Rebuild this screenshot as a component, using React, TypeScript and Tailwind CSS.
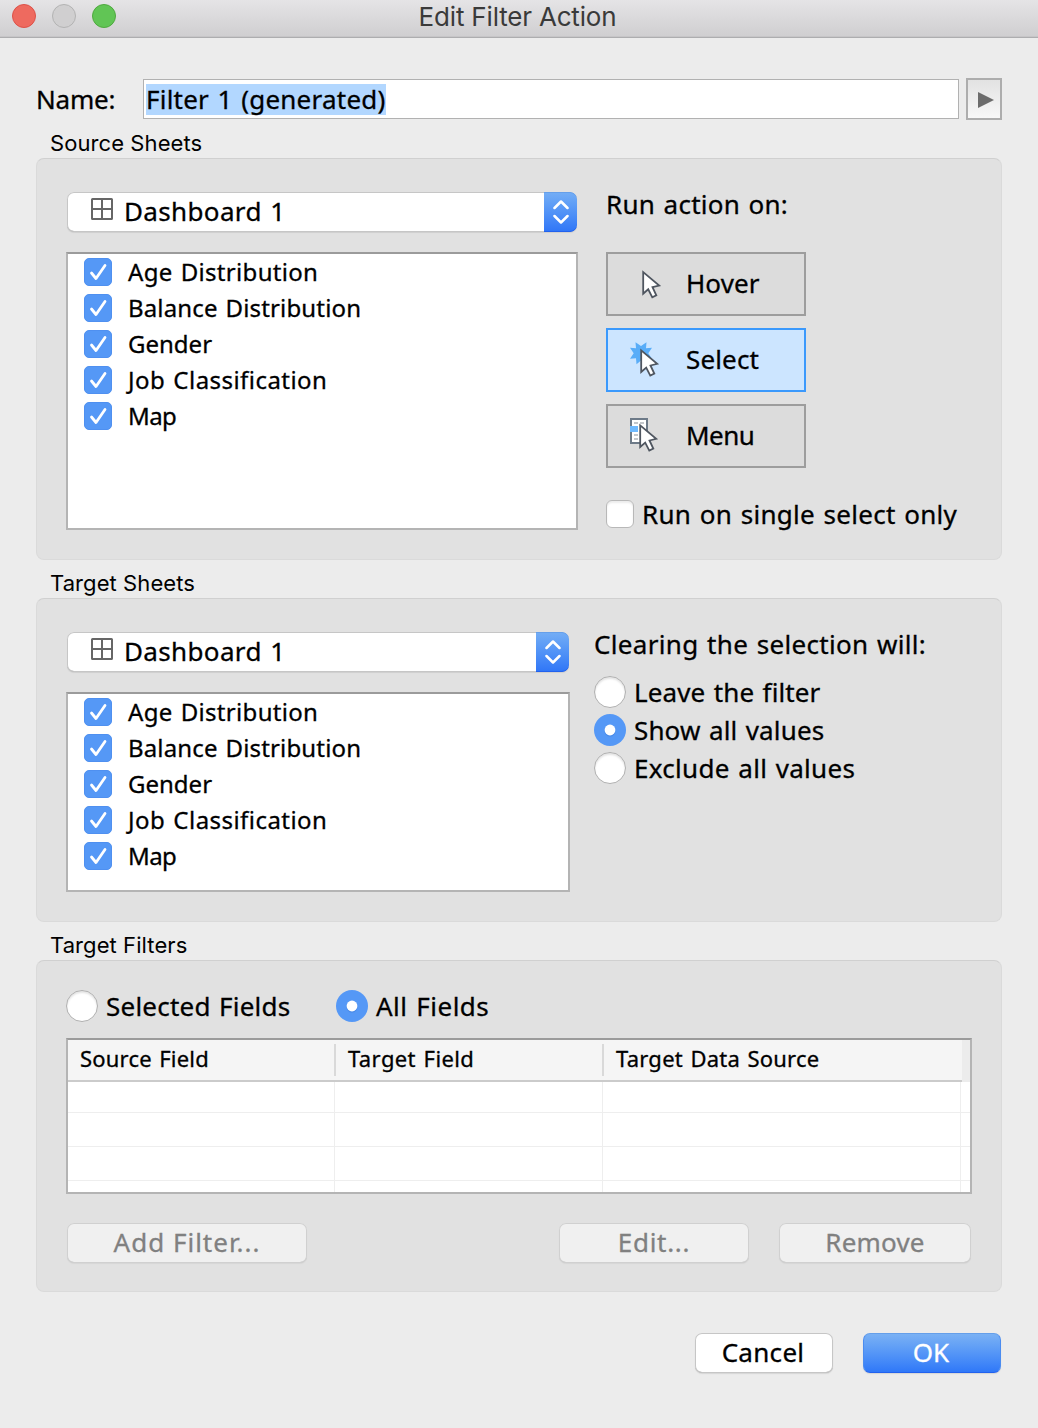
import React from "react";

const SHEETS = [
  { name: "Age Distribution", tracking: "tracking-[0.32px]" },
  { name: "Balance Distribution", tracking: "tracking-[0.15px]" },
  { name: "Gender", tracking: "tracking-[0px]" },
  { name: "Job Classification", tracking: "tracking-[0.45px]" },
  { name: "Map", tracking: "tracking-[-0.6px]" },
];

function TitleBar() {
  return (
    <header className="grid h-[38px] shrink-0 grid-cols-[1fr_auto_1fr] items-start border-b border-b-[#adadaf] bg-linear-to-b from-[#e5e4e6] to-[#cfced0] shadow-[inset_0_-1px_0_#c6c5c7]">
      <div className="flex gap-4 pt-1 pl-3">
        <span className="size-6 rounded-full border border-[#dd5148] bg-[#ee6a5f]" />
        <span className="size-6 rounded-full border border-[#b3b3b3] bg-[#d0cfd0]" />
        <span className="size-6 rounded-full border border-[#4fa93f] bg-[#61c555]" />
      </div>
      <h1 className="mr-[3px] font-['Inter',sans-serif] text-[26px] leading-[34px] tracking-[-0.18px] whitespace-nowrap text-[#3a3a3a] [word-spacing:0px]">Edit Filter Action</h1>
    </header>
  );
}

function Group({ title, className, children }: { title: string; className: string; children: React.ReactNode }) {
  return (
    <section>
      <h2 className="h-[38px] pt-2 pl-[14px] font-['Inter',sans-serif] text-[22px] leading-[30px] tracking-[0.08px] [-webkit-text-stroke:0px] [word-spacing:0px]">{title}</h2>
      <div className={`rounded-lg border border-[#dadada] border-t-[#d0d0d0] bg-[#e1e1e1] ${className}`}>{children}</div>
    </section>
  );
}

function Dropdown() {
  return (
    <div className="mx-px flex h-10 overflow-hidden rounded-[7px] bg-white shadow-[inset_0_0_0_1px_#c6c6c6,inset_0_-1px_0_#a8a8a8,0_1px_1px_#cfcfcf]">
      <svg className="mt-[6px] ml-6 size-[22px]" viewBox="0 0 22 22" fill="none" stroke="#666" strokeWidth="2">
        <rect x="1" y="1" width="20" height="20" rx="0.5" />
        <path d="M11 1v20M1 11h20" />
      </svg>
      <span className="ml-[11px] flex-1 leading-[39px] tracking-[0.35px]">Dashboard 1</span>
      <span className="flex w-[33px] items-center justify-center rounded-r-[7px] bg-linear-to-b from-[#74aef5] to-[#2f75f7] shadow-[inset_0_1px_0_#659fea,inset_0_-1px_0_#2262ee]">
        <svg className="h-6 w-4" viewBox="0 0 16 24" fill="none" stroke="#fff" strokeWidth="2.5" strokeLinecap="round" strokeLinejoin="round">
          <path d="M1.500 8 8 1.500 14.500 8M1.500 16 8 22.500 14.500 16" />
        </svg>
      </span>
    </div>
  );
}

function SheetList({ className }: { className: string }) {
  return (
    <ul className={`border-2 border-[#b4b4b4] border-t-[#9b9b9b] bg-white pl-4 text-2xl leading-9 ${className}`}>
      {SHEETS.map((s) => (
        <li key={s.name} className="flex h-9 items-center gap-4">
          <span className="flex size-7 items-center justify-center rounded-[5px] border border-[#4f90f0] bg-[#5598f6]">
            <svg className="size-[26px]" viewBox="0 0 26 26" fill="none" stroke="#fff" strokeWidth="2.8" strokeLinecap="round" strokeLinejoin="round">
              <path d="M6.500 14 11 19.500 20 6.500" />
            </svg>
          </span>
          <span className={s.tracking}>{s.name}</span>
        </li>
      ))}
    </ul>
  );
}

function Radio({ label, on, className }: { label: string; on?: boolean; className?: string }) {
  return (
    <div className="flex h-8 items-center gap-2">
      {on ? (
        <svg className="size-8" viewBox="0 0 32 32">
          <circle cx="16" cy="16" r="16" fill="#5598f6" />
          <circle cx="16" cy="17" r="5.500" fill="#3f7fe0" opacity="0.6" />
          <circle cx="16" cy="16" r="5.400" fill="#fff" />
        </svg>
      ) : (
        <span className="size-8 rounded-full border border-[#b0b0b0] bg-white shadow-[inset_0_2px_2px_#e4e4e4]" />
      )}
      <span className={`whitespace-nowrap ${className ?? ""}`}>{label}</span>
    </div>
  );
}

function Cursor() {
  return <path d="M1.200 2.400V24L6.200 19.600 10.300 27.600 14.300 25.600 10.500 17.500 17.200 15.800Z" fill="#fff" stroke="#4f5660" strokeWidth="1.8" />;
}

function HoverIcon() {
  return (
    <svg className="size-10" viewBox="0 0 40 40">
      <g transform="translate(12 5.700)"><Cursor /></g>
    </svg>
  );
}

function SelectIcon() {
  return (
    <svg className="size-10" viewBox="0 0 40 40">
      <path d="M5.500 2.300 11 6 16.500 2.300 16 8.300 22 7.800 18.300 13.300 22 18.800 16 18.300 11 20.600 6.500 24.300 6 18.300 0 18.800 3.700 13.300 0 7.800 6 8.300Z" fill="#59adf8" />
      <g transform="translate(10 8)"><Cursor /></g>
    </svg>
  );
}

function MenuIcon() {
  return (
    <svg className="size-10" viewBox="0 0 40 40">
      <rect x="1" y="3" width="16" height="24" fill="#fff" stroke="#6d7a88" strokeWidth="2" />
      <path d="M4 7h4M10 7h4M4 19h4M4 23h4" stroke="#c3c7cb" strokeWidth="2" />
      <path d="M0 10h8v6H0z" fill="#6fbaff" />
      <g transform="translate(9 7)"><Cursor /></g>
    </svg>
  );
}

function ActionButton({ label, icon, active, className }: { label: string; icon: React.ReactNode; active?: boolean; className: string }) {
  return (
    <button className={`flex h-16 w-[200px] items-center border-2 pl-[22px] ${active ? "border-[#3b99fc] bg-[#cce5ff]" : "border-[#9d9d9d] bg-[#dcdcdc]"}`}>
      {icon}
      <span className={`mb-0.5 ml-4 ${className}`}>{label}</span>
    </button>
  );
}

function DisabledButton({ label, className }: { label: string; className: string }) {
  return (
    <button className={`h-10 rounded-[7px] bg-[#f0f0f0] pb-px leading-[39px] text-[#808080] shadow-[inset_0_0_0_1px_#d0d0d0,inset_0_-1px_0_#c0c0c0,0_1px_1px_#d6d6d6] [-webkit-text-stroke:0.3px_#808080] ${className}`}>{label}</button>
  );
}

function FieldTable() {
  return (
    <div className="mt-4 h-[156px] overflow-hidden border-2 border-[#b4b4b4] border-t-[#9b9b9b] bg-white">
      <div className="flex h-[42px] bg-[#ececec] text-[22px] leading-[36px]">
        <div className="flex w-[894px] items-start border-b-2 border-[#cbcbcb] bg-[#f5f5f5]">
          <span className="w-[266px] pl-3 tracking-[0.2px]">Source Field</span>
          <span className="mt-1 h-8 w-0.5 bg-[#d9d9d9]" />
          <span className="w-[266px] pl-3 tracking-[0.4px]">Target Field</span>
          <span className="mt-1 h-8 w-0.5 bg-[#d9d9d9]" />
          <span className="pl-3 tracking-[0.23px]">Target Data Source</span>
        </div>
      </div>
      {["h-[31px]", "h-[34px]", "h-[34px]", "h-[34px]"].map((h, i) => (
        <div key={i} className={`grid grid-cols-[267px_268px_358px_1fr] border-b border-[#eee] ${h}`}>
          <span className="border-r border-[#eee]" />
          <span className="border-r border-[#eee]" />
          <span className="border-r border-[#eee]" />
        </div>
      ))}
    </div>
  );
}

export default function App() {
  return (
    <main className="flex h-[1428px] w-[1038px] flex-col overflow-hidden bg-[#ececec] font-['Noto_Sans',sans-serif] text-[26px] text-black [word-spacing:1.5px]">
      <TitleBar />
      <div className="px-9 pt-10 [-webkit-text-stroke:0.3px_black]">
        <div className="flex h-[42px] items-center">
          <label className="w-[107px] tracking-[-0.2px]">Name:</label>
          <div className="flex h-10 w-[816px] items-center border border-[#b1b1b1] bg-white pl-0.5">
            <span className="h-[31px] bg-[#b2d7ff] leading-[31px] tracking-[0.23px] whitespace-nowrap">Filter 1 (generated)</span>
          </div>
          <button className="ml-[7px] flex h-[42px] w-9 items-center justify-center border-2 border-[#adadad] bg-linear-to-b from-[#e2e2e2] to-[#f8f8f8]">
            <svg className="mt-px ml-[3px] h-4 w-4" viewBox="0 0 16 16"><path d="M0 0 16 8 0 16z" fill="#6c6c6c" /></svg>
          </button>
        </div>

        <Group title="Source Sheets" className="flex h-[402px] pl-[29px]">
          <div className="w-[512px] pt-[33px]">
            <Dropdown />
            <SheetList className="mt-5 h-[278px]" />
          </div>
          <div className="ml-7">
            <p className="mt-[27px] h-[66px] leading-9 tracking-[0.25px]">Run action on:</p>
            <div className="flex flex-col gap-3">
              <ActionButton label="Hover" icon={<HoverIcon />} className="tracking-[0.1px]" />
              <ActionButton label="Select" icon={<SelectIcon />} active className="tracking-[0.15px]" />
              <ActionButton label="Menu" icon={<MenuIcon />} className="tracking-[-0.5px]" />
            </div>
            <div className="mt-8 flex h-7 items-center gap-2">
              <span className="size-7 rounded-[6px] border border-[#b8b8b8] bg-white shadow-[inset_0_2px_2px_#ececec]" />
              <span className="whitespace-nowrap tracking-[0.29px]">Run on single select only</span>
            </div>
          </div>
        </Group>

        <Group title="Target Sheets" className="flex h-[324px] pl-[29px]">
          <div className="w-[504px] pt-[33px]">
            <Dropdown />
            <SheetList className="mt-5 h-[200px]" />
          </div>
          <div className="ml-6">
            <p className="mt-[27px] mb-[14px] leading-9 tracking-[0.32px]">Clearing the selection will:</p>
            <div className="flex flex-col gap-1.5">
              <Radio label="Leave the filter" className="tracking-[0.12px]" />
              <Radio label="Show all values" on className="tracking-[0.14px]" />
              <Radio label="Exclude all values" className="tracking-[0.3px]" />
            </div>
          </div>
        </Group>

        <Group title="Target Filters" className="h-[332px] px-[29px] pt-[29px]">
          <div className="flex">
            <div className="w-[270px]"><Radio label="Selected Fields" className="tracking-[0.22px]" /></div>
            <Radio label="All Fields" on className="tracking-[0.5px]" />
          </div>
          <FieldTable />
          <div className="mx-px mt-[29px] flex">
            <DisabledButton label="Add Filter..." className="w-60 tracking-[1px]" />
            <DisabledButton label="Edit..." className="mr-[30px] ml-auto w-[190px] tracking-[0.7px]" />
            <DisabledButton label="Remove" className="w-48 tracking-[0.2px]" />
          </div>
        </Group>

        <div className="mt-[41px] mr-px flex justify-end gap-[30px]">
          <button className="h-10 w-[138px] rounded-[7px] bg-white pr-0.5 pb-px leading-[39px] tracking-[0.3px] shadow-[inset_0_0_0_1px_#c6c6c6,inset_0_-1px_0_#a8a8a8,0_1px_1px_#d6d6d6]">Cancel</button>
          <button className="h-10 w-[138px] rounded-[7px] border border-[#4b8cf0] border-t-[#659fea] border-b-[#2262ee] bg-linear-to-b from-[#7ab1f4] to-[#2f78f8] pr-0.5 pb-px leading-[37px] text-white shadow-[0_1px_1px_#d6d6d6] [-webkit-text-stroke:0.3px_white]">OK</button>
        </div>
      </div>
    </main>
  );
}
